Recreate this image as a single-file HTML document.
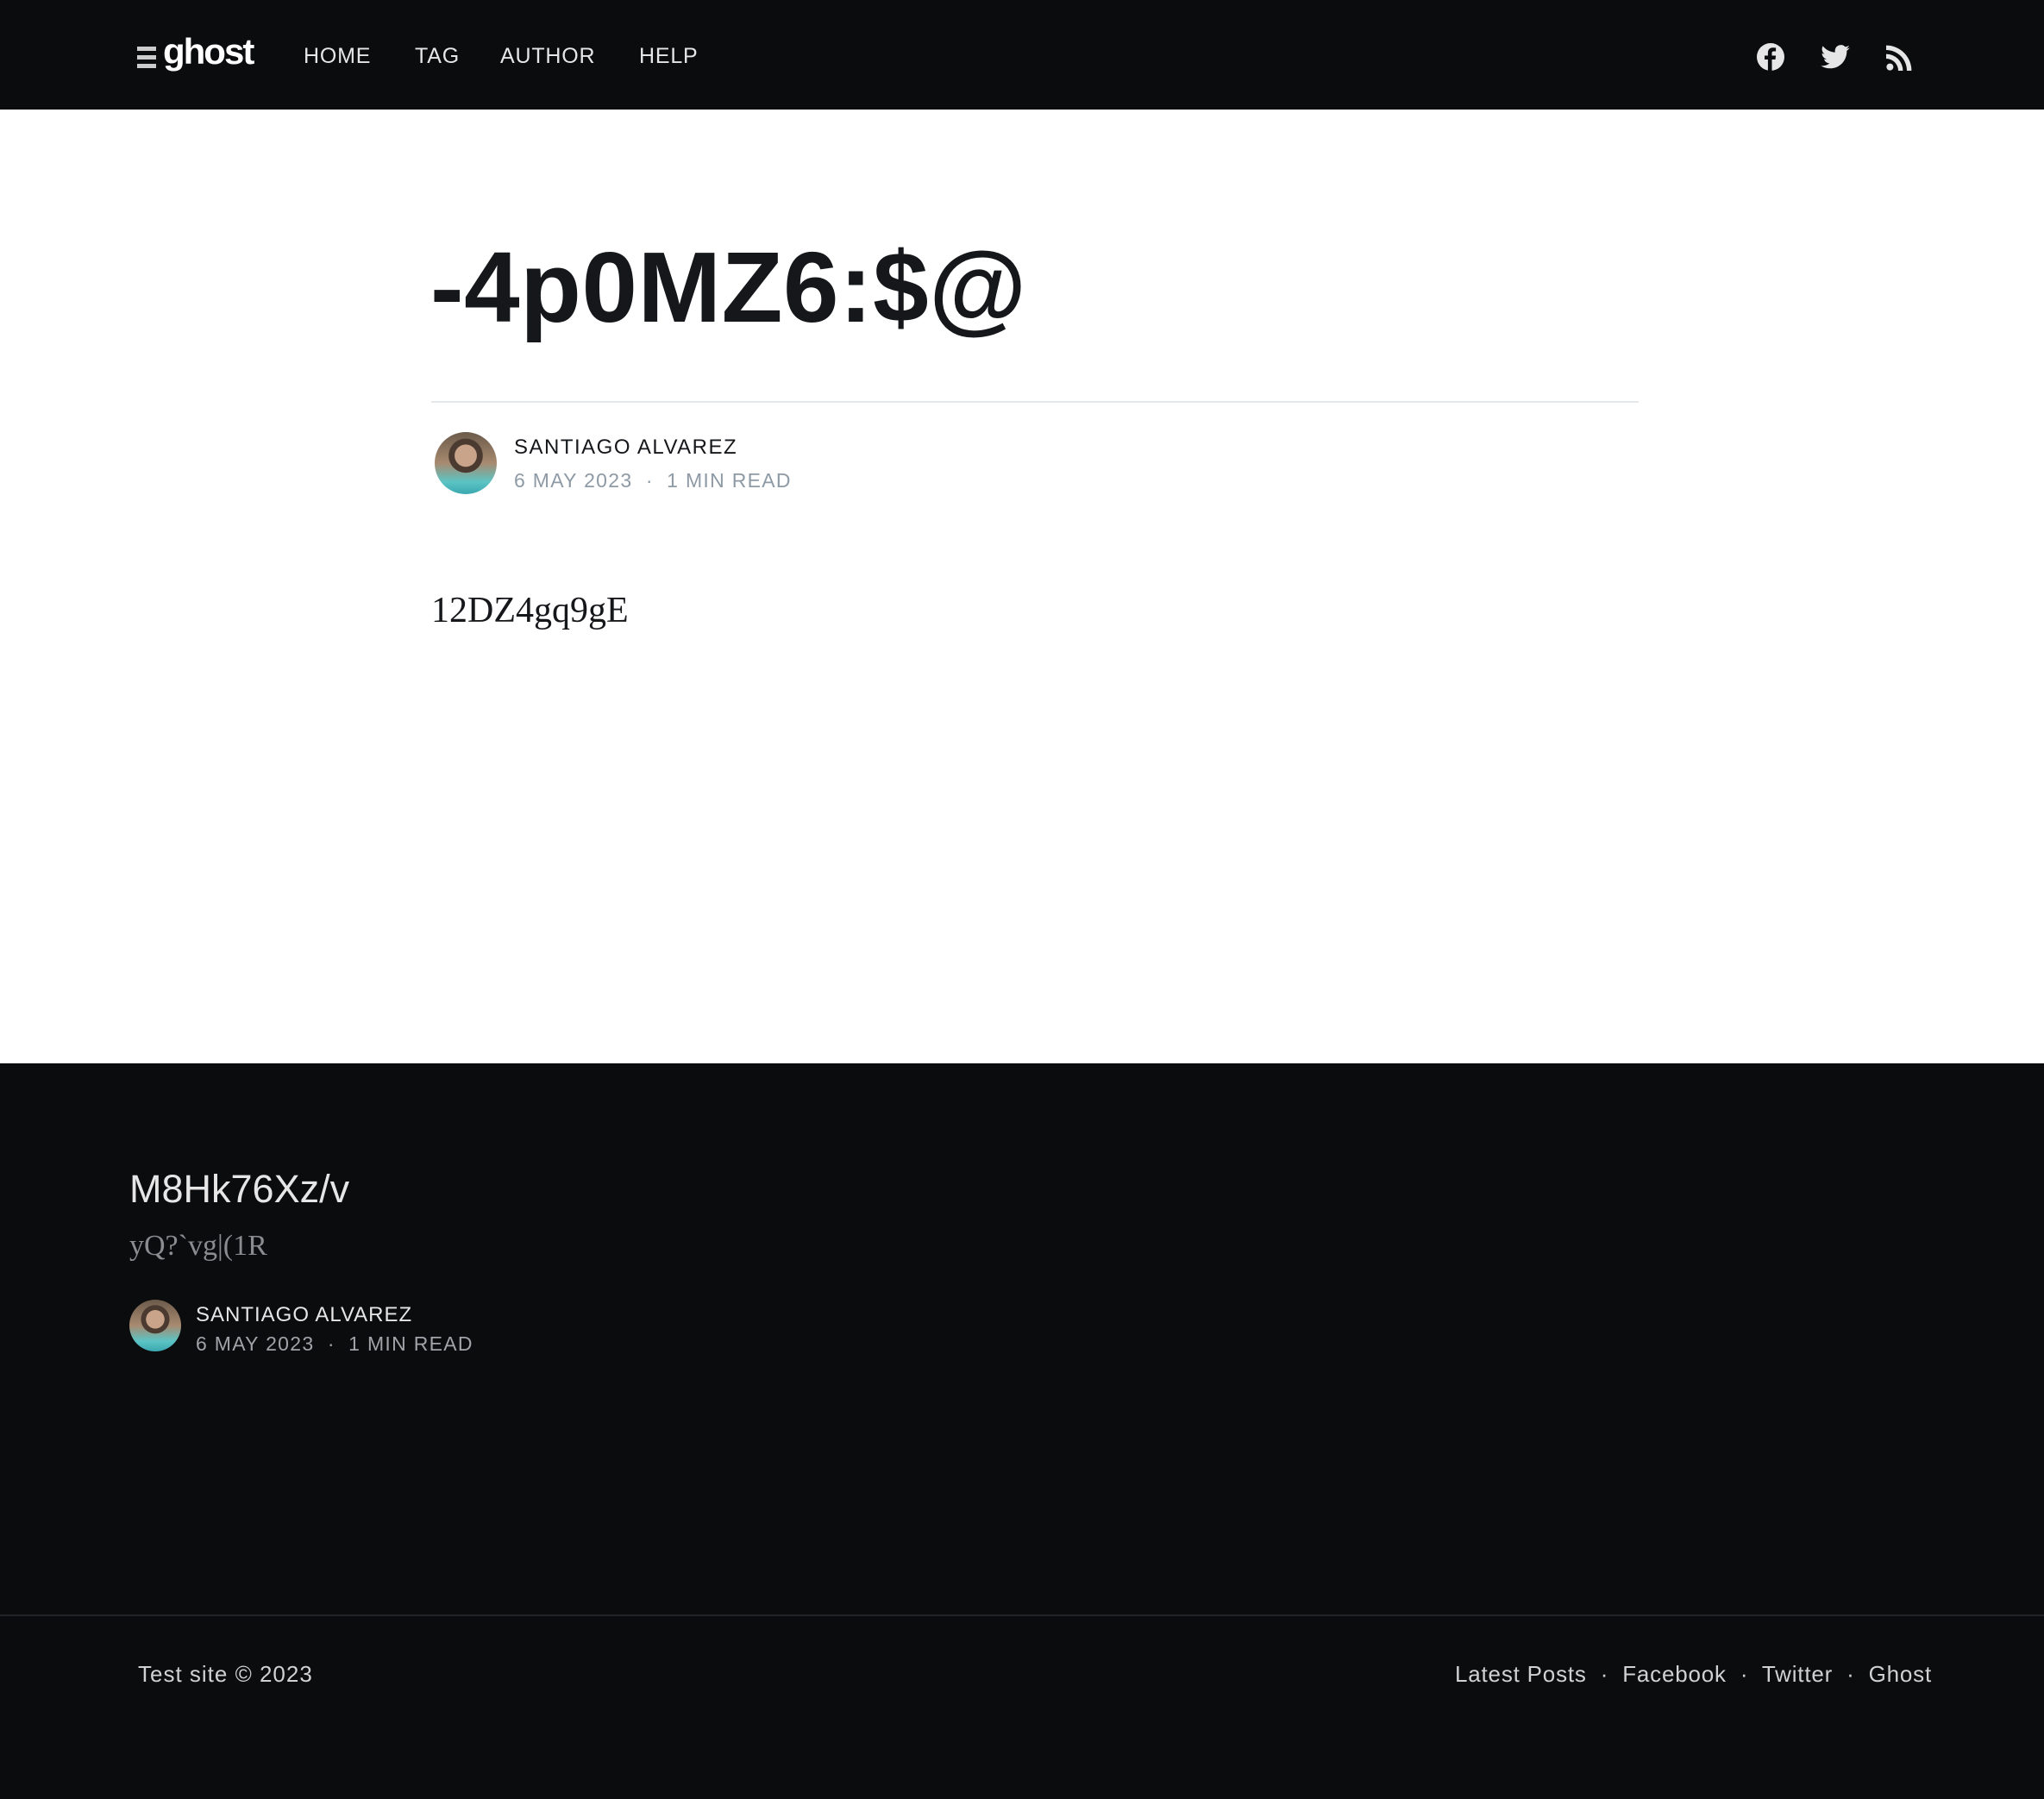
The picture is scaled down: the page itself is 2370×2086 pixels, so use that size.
<!DOCTYPE html>
<html><head><meta charset="utf-8"><style>
*{margin:0;padding:0;box-sizing:border-box}
body{width:2370px;height:2086px;background:#fff;font-family:"Liberation Sans",sans-serif;position:relative;overflow:hidden}
.hd{position:absolute;left:0;top:0;width:2370px;height:127px;background:#0b0c0e}
.abs{position:absolute;white-space:nowrap}
.nav{color:#e6e6e6;font-size:25px;letter-spacing:.8px;top:51px}
.av{position:absolute;border-radius:50%;background:radial-gradient(circle at 50% 38%,#c9a48a 0 22%,#4a3a30 23% 34%,transparent 35%),linear-gradient(180deg,#6b5a4a 0%,#a88a70 50%,#5cc4c4 80%,#3aa8b0 100%)}
.ft{position:absolute;left:0;top:1233px;width:2370px;height:853px;background:#0b0c0e}
</style></head><body>
<div class="hd"></div>
<div class="abs" style="left:159px;top:54px;width:22px">
<div style="height:5px;width:22px;background:#ccc;margin-bottom:5px;"></div>
<div style="height:5px;width:22px;background:#ccc;margin-bottom:5px;"></div>
<div style="height:5px;width:22px;background:#ccc"></div></div>
<div class="abs" style="left:189px;top:36px;font-size:42px;font-weight:bold;color:#fff;letter-spacing:-2px">ghost</div>
<div class="abs nav" style="left:352px">HOME</div>
<div class="abs nav" style="left:481px">TAG</div>
<div class="abs nav" style="left:580px">AUTHOR</div>
<div class="abs nav" style="left:741px">HELP</div>
<svg class="abs" style="left:2037px;top:50px" width="32" height="32" viewBox="0 0 32 32"><circle cx="16" cy="16" r="16" fill="#e6e6e6"/><path d="M17.5 32V19h4l.6-4.5h-4.6v-2.8c0-1.3.4-2.2 2.2-2.2h2.4V5.5c-.4-.1-1.8-.2-3.5-.2-3.4 0-5.7 2.1-5.7 5.9v3.3H9V19h3.9v13z" fill="#0b0c0e"/></svg>
<svg class="abs" style="left:2111px;top:52px" width="34" height="28" viewBox="0 0 24 20"><path d="M24 2.4c-.9.4-1.8.7-2.8.8 1-.6 1.8-1.600 2.2-2.700-1 .6-2 1-3.100 1.200A4.900 4.900 0 0 0 11.900 6.200 14 14 0 0 1 1.700 1 4.900 4.900 0 0 0 3.200 7.600c-.8 0-1.600-.3-2.200-.6 0 2.400 1.700 4.400 3.900 4.800-.7.2-1.500.2-2.200.1.6 2 2.400 3.400 4.600 3.400A9.900 9.900 0 0 1 0 17.300 14 14 0 0 0 7.500 19.500c9.100 0 14-7.500 14-14v-.6c1-.7 1.800-1.600 2.500-2.500z" fill="#e6e6e6"/></svg>
<svg class="abs" style="left:2187px;top:52px" width="30" height="30" viewBox="0 0 24 24"><circle cx="3.5" cy="20.5" r="3.2" fill="#e6e6e6"/><path d="M0 8.5a15.5 15.5 0 0 1 15.5 15.5h-4.3A11.2 11.2 0 0 0 0 12.8zM0 .5A23.5 23.5 0 0 1 23.5 24h-4.3A19.2 19.2 0 0 0 0 4.8z" fill="#e6e6e6"/></svg>

<div class="abs" style="left:499px;top:266px;font-size:116px;font-weight:bold;color:#15171a;letter-spacing:0.5px">-4p0MZ6:$@</div>
<div class="abs" style="left:500px;top:465px;width:1400px;height:2px;background:#e5e8eb"></div>
<div class="av" style="left:504px;top:501px;width:72px;height:72px"></div>
<div class="abs" style="left:596px;top:505px;font-size:24px;color:#15171a;letter-spacing:1.5px">SANTIAGO ALVAREZ</div>
<div class="abs" style="left:596px;top:544px;font-size:23px;color:#8e9aa5;letter-spacing:1.3px">6 MAY 2023 &nbsp;·&nbsp; 1 MIN READ</div>
<div class="abs" style="left:500px;top:684px;font-size:42px;font-family:'Liberation Serif',serif;color:#15171a">12DZ4gq9gE</div>

<div class="ft"></div>
<div class="abs" style="left:150px;top:1353px;font-size:45px;color:#e6e6e6">M8Hk76Xz/v</div>
<div class="abs" style="left:150px;top:1426px;font-size:34px;font-family:'Liberation Serif',serif;color:#8a8c8f">yQ?`vg|(1R</div>
<div class="av" style="left:150px;top:1507px;width:60px;height:60px"></div>
<div class="abs" style="left:227px;top:1511px;font-size:24px;color:#e6e6e6;letter-spacing:1px">SANTIAGO ALVAREZ</div>
<div class="abs" style="left:227px;top:1545px;font-size:23px;color:#a0a4a8;letter-spacing:1.3px">6 MAY 2023 &nbsp;·&nbsp; 1 MIN READ</div>
<div class="abs" style="left:0;top:1872px;width:2370px;height:2px;background:#222427"></div>
<div class="abs" style="left:160px;top:1926px;font-size:26px;color:#cfd1d3;letter-spacing:1px">Test site © 2023</div>
<div class="abs" style="right:130px;top:1926px;font-size:26px;color:#cfd1d3;letter-spacing:0.8px">Latest Posts &nbsp;·&nbsp; Facebook &nbsp;·&nbsp; Twitter &nbsp;·&nbsp; Ghost</div>
</body></html>
